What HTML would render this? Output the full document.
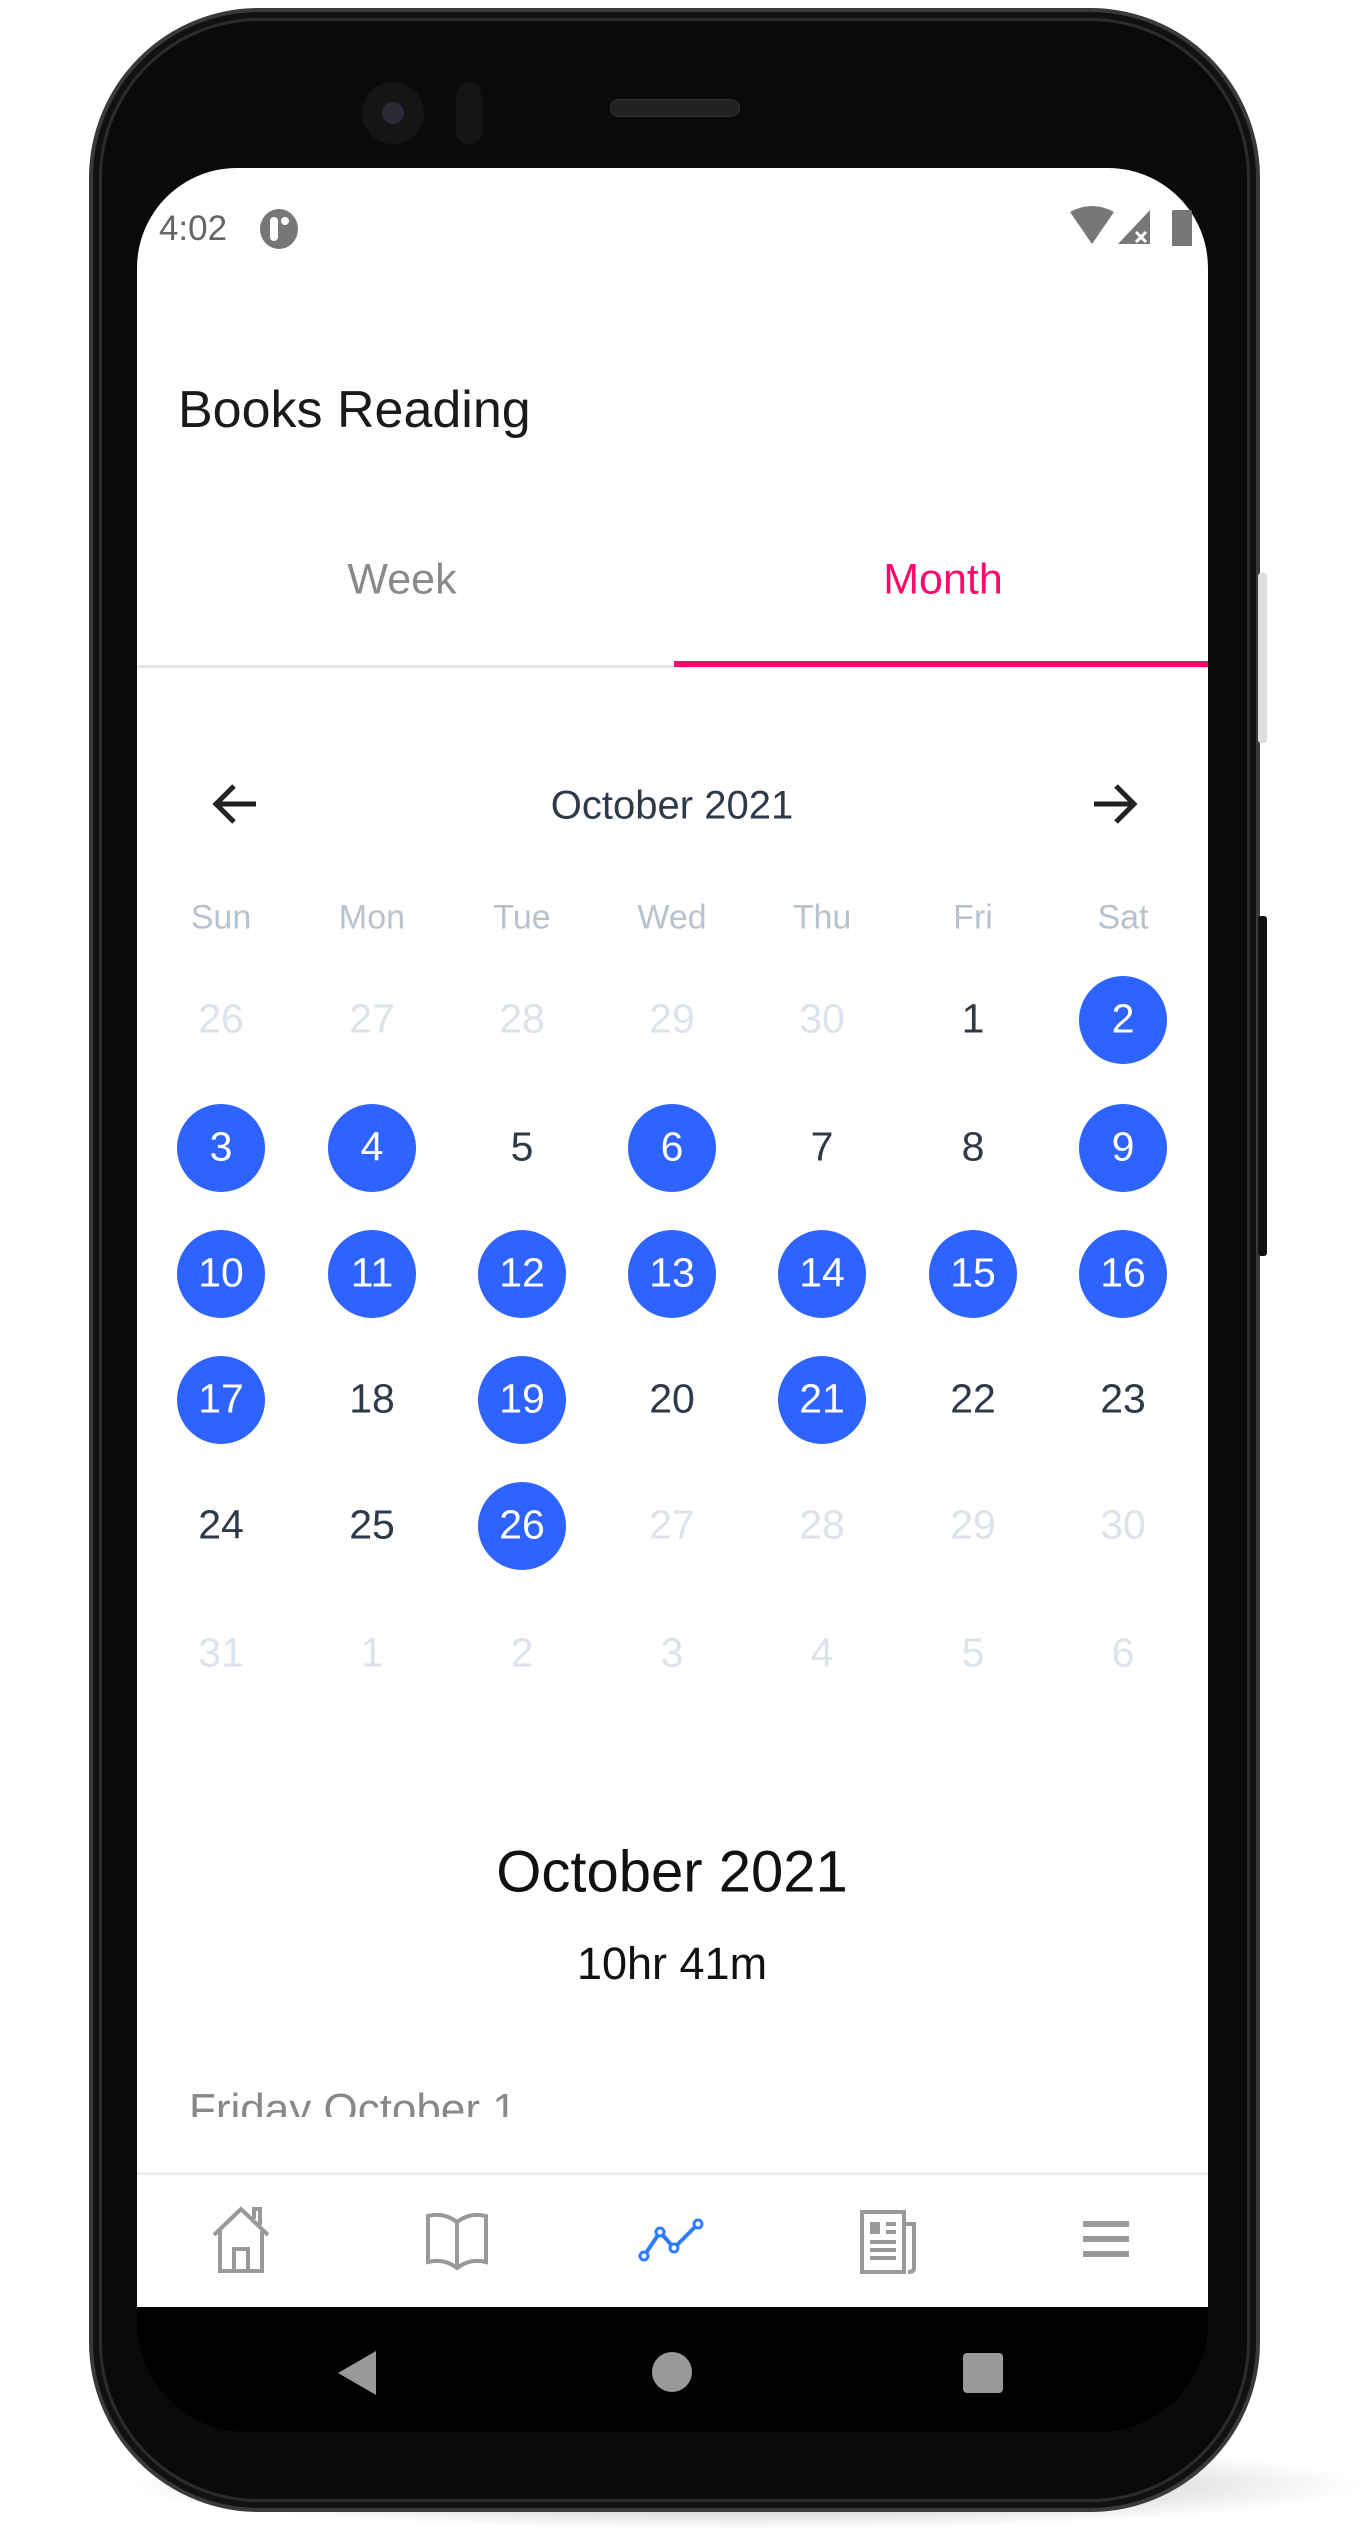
<!DOCTYPE html>
<html><head><meta charset="utf-8"><style>
*{margin:0;padding:0;box-sizing:border-box}
body{width:1370px;height:2534px;background:#fff;position:relative;overflow:hidden;font-family:"Liberation Sans",sans-serif}
.abs{position:absolute}
.shadow{left:120px;top:2440px;width:1250px;height:90px;border-radius:50%;background:radial-gradient(ellipse at center,rgba(0,0,0,.35),rgba(0,0,0,0) 70%)}
.phone{left:89px;top:8px;width:1171px;height:2504px;border-radius:170px;background:#0a0a0a;border:4px solid #3a3a3a;box-shadow:inset 0 0 0 6px #111,inset 0 0 0 9px #2c2c2c}
.screen{left:137px;top:168px;width:1071px;height:2139px;background:#fff;border-radius:100px 100px 0 0;overflow:hidden}
.navbar{left:137px;top:2307px;width:1071px;height:125px;background:#000;border-radius:0 0 110px 110px}
.t{position:absolute;transform:translate(-50%,-50%);white-space:nowrap}
.c{position:absolute;width:88px;height:88px;border-radius:50%;background:#2E63FF;transform:translate(-50%,-50%)}
.num{font-size:41px;color:#2d3a4a}
.w{color:#fff}
.f{color:#dde3ea}
.dn{font-size:34px;color:#b8c2cf}
</style></head><body>
<div class="abs shadow"></div>
<div class="abs phone"></div>
<div class="abs" style="left:1258px;top:573px;width:9px;height:170px;background:#ddd;border-radius:3px"></div>
<div class="abs" style="left:1258px;top:916px;width:9px;height:340px;background:#111;border-radius:3px"></div>
<!-- camera / speaker -->
<div class="abs" style="left:362px;top:82px;width:62px;height:62px;border-radius:50%;background:#151515"></div>
<div class="abs" style="left:382px;top:102px;width:22px;height:22px;border-radius:50%;background:#2a2a35"></div>
<div class="abs" style="left:456px;top:82px;width:26px;height:62px;border-radius:13px;background:#141414"></div>
<div class="abs" style="left:610px;top:99px;width:130px;height:18px;border-radius:9px;background:#222;border:1px solid #333"></div>
<div class="abs screen">
</div>
<div class="abs navbar"></div>
<!-- status bar -->
<div class="t" style="left:193px;top:229px;font-size:35px;color:#666">4:02</div>
<div class="abs" style="left:260px;top:209px;width:38px;height:40px;border-radius:50%;background:#777"></div>
<div class="abs" style="left:270px;top:217px;width:8px;height:24px;background:#fff;border-radius:4px"></div>
<div class="abs" style="left:281px;top:217px;width:8px;height:8px;background:#fff;border-radius:50%"></div>
<svg class="abs" style="left:1070px;top:206px" width="130" height="40"><path d="M0 6 Q22 -6 44 6 L22 38Z" fill="#777"/><path d="M48 38 L80 4 L80 38Z" fill="#777"/><path d="M66 26 l10 10 M76 26 l-10 10" stroke="#fff" stroke-width="3"/><rect x="102" y="4" width="20" height="38" rx="2" fill="#777"/></svg>
<!-- title -->
<div class="abs" style="left:178px;top:380px;font-size:52px;color:#1a1a1a">Books Reading</div>
<div class="t" style="left:402px;top:580px;font-size:43px;color:#8a8a8a">Week</div>
<div class="t" style="left:943px;top:580px;font-size:43px;color:#FF0A6C">Month</div>
<div class="abs" style="left:137px;top:665px;width:1071px;height:3px;background:#e6e6e6"></div>
<div class="abs" style="left:674px;top:661px;width:534px;height:6px;background:#FF0A6C"></div>
<!-- calendar header -->
<svg class="abs" style="left:210px;top:782px" width="50" height="44"><path d="M46 22 H6 M24 4 L6 22 L24 40" stroke="#222" stroke-width="5" fill="none"/></svg>
<svg class="abs" style="left:1090px;top:782px" width="50" height="44"><path d="M4 22 H44 M26 4 L44 22 L26 40" stroke="#222" stroke-width="5" fill="none"/></svg>
<div class="t" style="left:672px;top:806px;font-size:40px;color:#2d3a4a">October 2021</div>
<div class="t dn" style="left:221px;top:918px">Sun</div>
<div class="t dn" style="left:372px;top:918px">Mon</div>
<div class="t dn" style="left:522px;top:918px">Tue</div>
<div class="t dn" style="left:672px;top:918px">Wed</div>
<div class="t dn" style="left:822px;top:918px">Thu</div>
<div class="t dn" style="left:973px;top:918px">Fri</div>
<div class="t dn" style="left:1123px;top:918px">Sat</div>
<!-- row1 y1019 -->
<div class="t num f" style="left:221px;top:1019px">26</div>
<div class="t num f" style="left:372px;top:1019px">27</div>
<div class="t num f" style="left:522px;top:1019px">28</div>
<div class="t num f" style="left:672px;top:1019px">29</div>
<div class="t num f" style="left:822px;top:1019px">30</div>
<div class="t num" style="left:973px;top:1019px">1</div>
<div class="c" style="left:1123px;top:1020px"></div><div class="t num w" style="left:1123px;top:1019px">2</div>
<!-- row2 y1147 -->
<div class="c" style="left:221px;top:1148px"></div><div class="t num w" style="left:221px;top:1147px">3</div>
<div class="c" style="left:372px;top:1148px"></div><div class="t num w" style="left:372px;top:1147px">4</div>
<div class="t num" style="left:522px;top:1147px">5</div>
<div class="c" style="left:672px;top:1148px"></div><div class="t num w" style="left:672px;top:1147px">6</div>
<div class="t num" style="left:822px;top:1147px">7</div>
<div class="t num" style="left:973px;top:1147px">8</div>
<div class="c" style="left:1123px;top:1148px"></div><div class="t num w" style="left:1123px;top:1147px">9</div>
<!-- row3 y1273 -->
<div class="c" style="left:221px;top:1274px"></div><div class="t num w" style="left:221px;top:1273px">10</div>
<div class="c" style="left:372px;top:1274px"></div><div class="t num w" style="left:372px;top:1273px">11</div>
<div class="c" style="left:522px;top:1274px"></div><div class="t num w" style="left:522px;top:1273px">12</div>
<div class="c" style="left:672px;top:1274px"></div><div class="t num w" style="left:672px;top:1273px">13</div>
<div class="c" style="left:822px;top:1274px"></div><div class="t num w" style="left:822px;top:1273px">14</div>
<div class="c" style="left:973px;top:1274px"></div><div class="t num w" style="left:973px;top:1273px">15</div>
<div class="c" style="left:1123px;top:1274px"></div><div class="t num w" style="left:1123px;top:1273px">16</div>
<!-- row4 y1399 -->
<div class="c" style="left:221px;top:1400px"></div><div class="t num w" style="left:221px;top:1399px">17</div>
<div class="t num" style="left:372px;top:1399px">18</div>
<div class="c" style="left:522px;top:1400px"></div><div class="t num w" style="left:522px;top:1399px">19</div>
<div class="t num" style="left:672px;top:1399px">20</div>
<div class="c" style="left:822px;top:1400px"></div><div class="t num w" style="left:822px;top:1399px">21</div>
<div class="t num" style="left:973px;top:1399px">22</div>
<div class="t num" style="left:1123px;top:1399px">23</div>
<!-- row5 y1525 -->
<div class="t num" style="left:221px;top:1525px">24</div>
<div class="t num" style="left:372px;top:1525px">25</div>
<div class="c" style="left:522px;top:1526px"></div><div class="t num w" style="left:522px;top:1525px">26</div>
<div class="t num f" style="left:672px;top:1525px">27</div>
<div class="t num f" style="left:822px;top:1525px">28</div>
<div class="t num f" style="left:973px;top:1525px">29</div>
<div class="t num f" style="left:1123px;top:1525px">30</div>
<!-- row6 y1653 -->
<div class="t num f" style="left:221px;top:1653px">31</div>
<div class="t num f" style="left:372px;top:1653px">1</div>
<div class="t num f" style="left:522px;top:1653px">2</div>
<div class="t num f" style="left:672px;top:1653px">3</div>
<div class="t num f" style="left:822px;top:1653px">4</div>
<div class="t num f" style="left:973px;top:1653px">5</div>
<div class="t num f" style="left:1123px;top:1653px">6</div>
<!-- summary -->
<div class="t" style="left:672px;top:1872px;font-size:58px;color:#111">October 2021</div>
<div class="t" style="left:672px;top:1964px;font-size:45px;color:#111">10hr 41m</div>
<div class="abs" style="left:189px;top:2085px;height:32px;overflow:hidden"><div style="font-size:44px;color:#888;line-height:50px">Friday October 1</div></div>
<!-- bottom nav -->
<div class="abs" style="left:137px;top:2172px;width:1071px;height:3px;background:#eee"></div>
<svg class="abs" style="left:210px;top:2205px" width="62" height="70"><path d="M4 30 L31 4 L58 30 M10 26 V66 H52 V26 M24 66 V44 H38 V66 M44 14 V4 H50 V20" stroke="#999" stroke-width="4" fill="none"/></svg>
<svg class="abs" style="left:424px;top:2212px" width="66" height="60"><path d="M4 4 Q20 0 33 10 Q46 0 62 4 V50 Q46 46 33 56 Q20 46 4 50Z M33 10 V56" stroke="#999" stroke-width="4" fill="none"/></svg>
<svg class="abs" style="left:638px;top:2218px" width="66" height="44"><path d="M6 38 L22 14 L36 30 L60 6" stroke="#2E7BFF" stroke-width="4" fill="none"/><circle cx="6" cy="38" r="4" fill="#fff" stroke="#2E7BFF" stroke-width="3"/><circle cx="22" cy="14" r="4" fill="#fff" stroke="#2E7BFF" stroke-width="3"/><circle cx="36" cy="30" r="4" fill="#fff" stroke="#2E7BFF" stroke-width="3"/><circle cx="60" cy="6" r="4" fill="#fff" stroke="#2E7BFF" stroke-width="3"/></svg>
<svg class="abs" style="left:858px;top:2208px" width="62" height="68"><path d="M4 4 H46 V64 H4Z M46 16 H56 V60 Q56 64 50 64" stroke="#999" stroke-width="4" fill="none"/><rect x="12" y="14" width="10" height="12" fill="#999"/><path d="M28 16 H38 M28 24 H38 M12 34 H38 M12 42 H38 M12 50 H38" stroke="#999" stroke-width="4"/></svg>
<svg class="abs" style="left:1083px;top:2220px" width="46" height="40"><path d="M0 4 H46 M0 19 H46 M0 34 H46" stroke="#999" stroke-width="6"/></svg>
<!-- system nav -->
<svg class="abs" style="left:336px;top:2349px" width="44" height="48"><path d="M40 2 V46 L2 24Z" fill="#999"/></svg>
<div class="abs" style="left:652px;top:2352px;width:40px;height:40px;border-radius:50%;background:#999"></div>
<div class="abs" style="left:963px;top:2353px;width:40px;height:40px;border-radius:4px;background:#999"></div>
</body></html>
